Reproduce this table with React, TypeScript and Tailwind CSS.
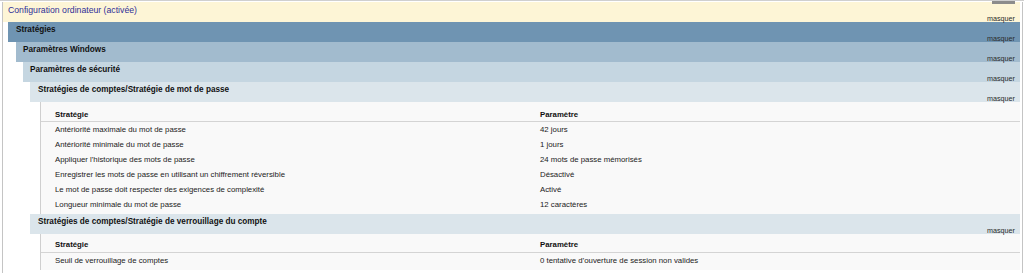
import React from "react";

const rows1: [string, string][] = [
  ["Antériorité maximale du mot de passe", "42 jours"],
  ["Antériorité minimale du mot de passe", "1 jours"],
  ["Appliquer l'historique des mots de passe", "24 mots de passe mémorisés"],
  ["Enregistrer les mots de passe en utilisant un chiffrement réversible", "Désactivé"],
  ["Le mot de passe doit respecter des exigences de complexité", "Activé"],
  ["Longueur minimale du mot de passe", "12 caractères"],
];

const rows2: [string, string][] = [
  ["Seuil de verrouillage de comptes", "0 tentative d’ouverture de session non valides"],
];

function Bar({
  title,
  bg,
  pl,
  titleClass,
}: {
  title: string;
  bg: string;
  pl: string;
  titleClass: string;
}) {
  return (
    <div className={`flex flex-col h-[20px] ${bg}`}>
      <div className={`pt-[3px] leading-[10px] whitespace-nowrap ${pl} ${titleClass}`}>{title}</div>
      <div className="mt-auto self-end pr-[5px] text-[7.2px] leading-[7px] text-[#2a2a2a]">masquer</div>
    </div>
  );
}

function Table({ rows, headPt, headPb }: { rows: [string, string][]; headPt: string; headPb: string }) {
  return (
    <div className="ml-[10px] border-l border-[#cfcfcf] bg-[#f9f9f9] pb-[2px]">
      <div className={`grid grid-cols-[485px_1fr] pl-[14px] leading-[10px] text-[7.8px] font-bold text-[#111] ${headPt} ${headPb} border-b border-[#d4d4d4]`}>
        <div>Stratégie</div>
        <div>Paramètre</div>
      </div>
      {rows.map(([a, b]) => (
        <div key={a} className="grid grid-cols-[485px_1fr] pl-[14px] h-[15px] leading-[15px] text-[7.8px] text-[#222] whitespace-nowrap">
          <div>{a}</div>
          <div>{b}</div>
        </div>
      ))}
    </div>
  );
}

export default function App() {
  const bold = "text-[8.2px] font-bold text-[#111]";
  return (
    <div className="relative w-[1024px] h-[273px] overflow-hidden bg-white border-t border-[#cfcfcf] pt-[1px] font-['Liberation_Sans',Arial,sans-serif]">
      <div className="absolute top-0 left-[992px] w-[23px] h-[3px] bg-[#8c8c8c]" />
      <div className="ml-[2px] w-[1021px] h-full border-l border-r border-[#c4c4c4] pr-[2px]">
        <Bar
          title="Configuration ordinateur (activée)"
          bg="bg-[#fdf5d6]"
          pl="pl-[5px]"
          titleClass="text-[8.7px] text-[#2f2f96]"
        />
        <div className="ml-[5px]">
          <Bar title="Stratégies" bg="bg-[#6f94b2]" pl="pl-[8px]" titleClass={bold} />
          <div className="ml-[8px]">
            <Bar title="Paramètres Windows" bg="bg-[#a2bbce]" pl="pl-[7px]" titleClass={bold} />
            <div className="ml-[7px]">
              <Bar title="Paramètres de sécurité" bg="bg-[#c5d6e1]" pl="pl-[7px]" titleClass={bold} />
              <div className="ml-[7px]">
                <Bar
                  title="Stratégies de comptes/Stratégie de mot de passe"
                  bg="bg-[#dbe5eb]"
                  pl="pl-[8px]"
                  titleClass={bold}
                />
                <Table rows={rows1} headPt="pt-[8px]" headPb="pb-[1px]" />
                <Bar
                  title="Stratégies de comptes/Stratégie de verrouillage du compte"
                  bg="bg-[#dbe5eb]"
                  pl="pl-[8px]"
                  titleClass={bold}
                />
                <Table rows={rows2} headPt="pt-[6px]" headPb="pb-[2px]" />
              </div>
            </div>
          </div>
        </div>
      </div>
    </div>
  );
}
